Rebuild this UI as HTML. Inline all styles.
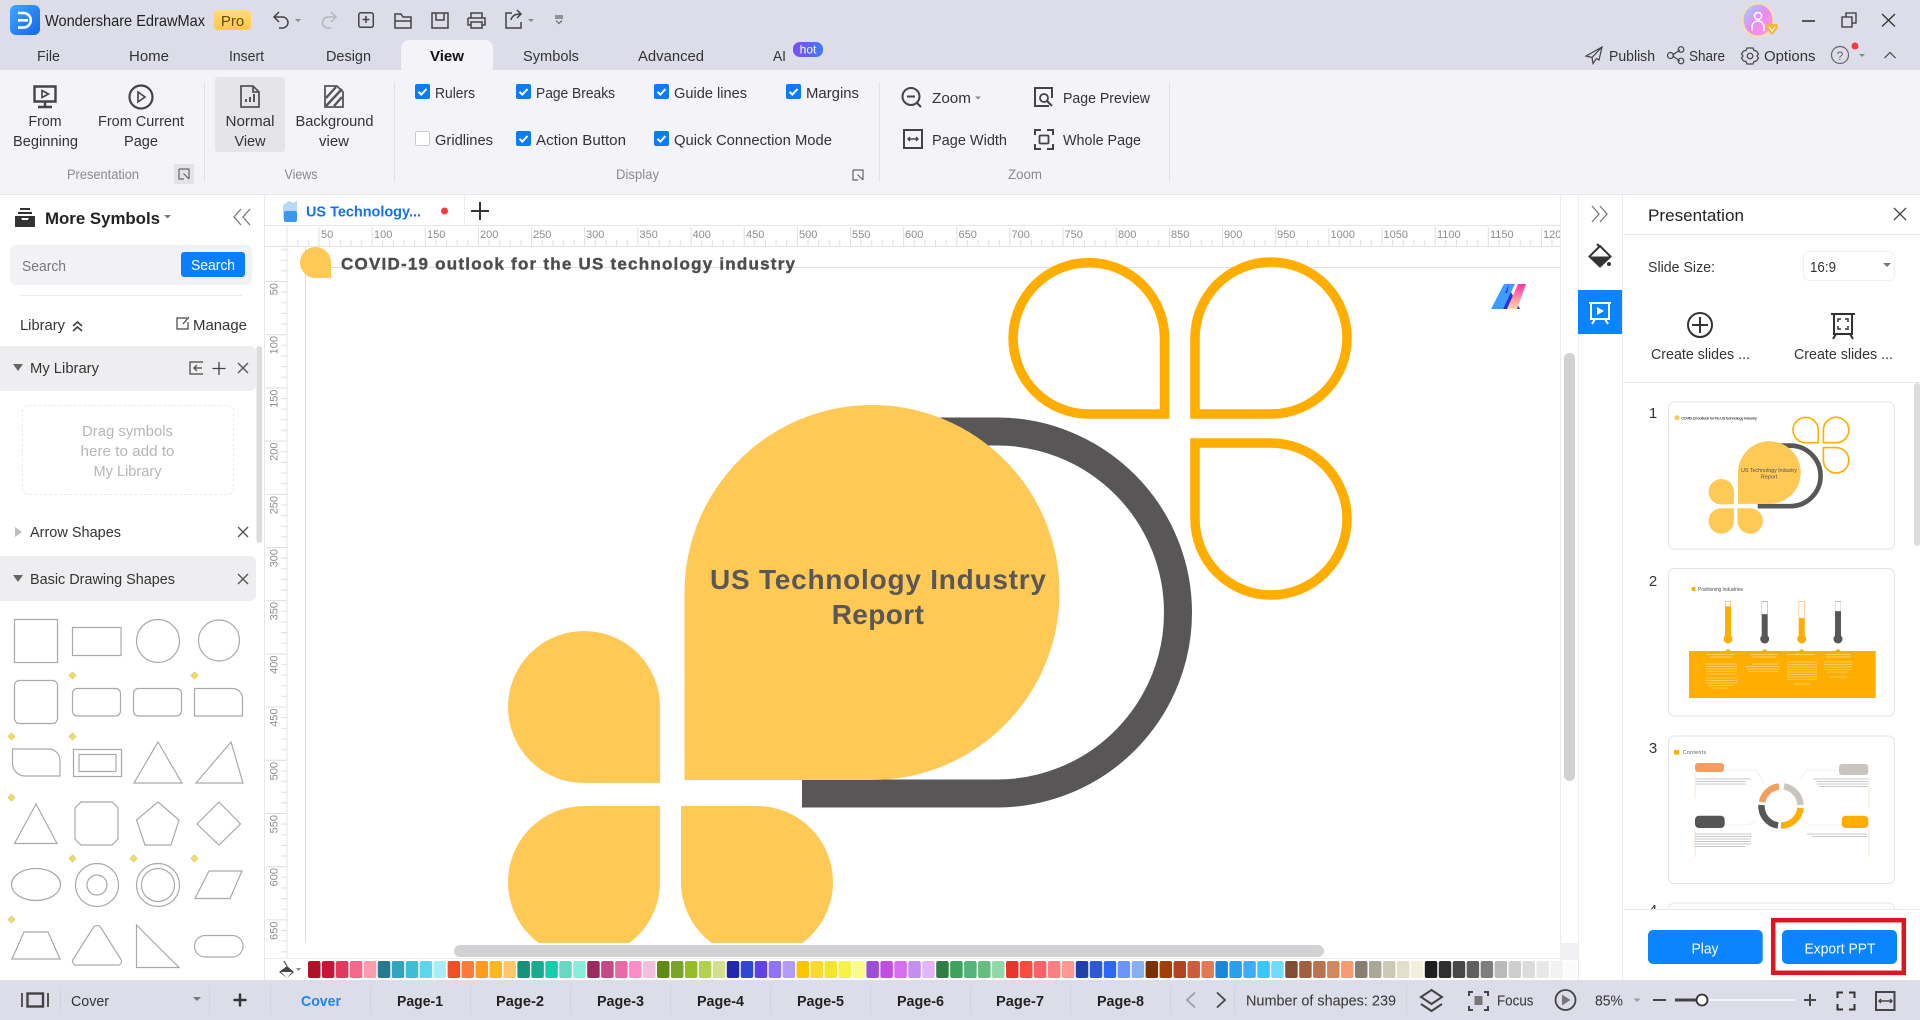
<!DOCTYPE html>
<html lang="en"><head><meta charset="utf-8"><title>Wondershare EdrawMax</title>
<style>
html,body{margin:0;padding:0;background:#fff;width:1920px;height:1020px;overflow:hidden}
svg{display:block}
text{font-family:"Liberation Sans",sans-serif;font-size:15px;fill:#333}
.l{fill:#8b8b8b;font-size:13px}
.m{text-anchor:middle}
.r{font-size:11px;fill:#8c8c8c}
.b{font-weight:700;fill:#222}
.i{fill:none;stroke:#444;stroke-width:1.5}
.s{fill:none;stroke:#a9a9a9;stroke-width:1.2}
.d{fill:#efdc70;stroke:#d8c95a;stroke-width:.7}
.y{fill:#fec955}
.o{fill:none;stroke:#ffae00}
</style></head><body>
<svg width="1920" height="1020" viewBox="0 0 1920 1020" xmlns="http://www.w3.org/2000/svg">
<defs>
<linearGradient id="g1" x1="0" y1="0" x2="1" y2="1"><stop offset="0" stop-color="#41a5ff"/><stop offset="1" stop-color="#1468e6"/></linearGradient>
<linearGradient id="g2" x1="0" y1="0" x2="0" y2="1"><stop offset="0" stop-color="#ffdc7c"/><stop offset="1" stop-color="#ffc64a"/></linearGradient>
<linearGradient id="g3" x1="0" y1="0" x2="1" y2="0"><stop offset="0" stop-color="#7b4df0"/><stop offset="1" stop-color="#3f7cf5"/></linearGradient>
<linearGradient id="g4" x1="0" y1="0" x2="1" y2="1"><stop offset="0" stop-color="#8fd8ff"/><stop offset=".5" stop-color="#e88cf5"/><stop offset="1" stop-color="#ff9ad0"/></linearGradient>
<linearGradient id="g5" x1="0" y1="0" x2="0" y2="1"><stop offset="0" stop-color="#ff2fa8"/><stop offset="1" stop-color="#ffd9a0"/></linearGradient>
<pattern id="hr" x="318.5" y="225" width="53.15" height="21" patternUnits="userSpaceOnUse">
<path d="M.5 2V21M11.1 15V21M21.8 15V21M32.4 15V21M43 15V21" stroke="#dedede" fill="none"/></pattern>
<pattern id="vr" x="264" y="281" width="23" height="53.2" patternUnits="userSpaceOnUse">
<path d="M2 .5H23M17 11.1H23M17 21.8H23M17 32.4H23M17 43H23" stroke="#dedede" fill="none"/></pattern>
<clipPath id="cv"><rect x="287" y="246" width="1273" height="697"/></clipPath>
<clipPath id="hc"><rect x="287" y="225" width="1273" height="21"/></clipPath>
<clipPath id="pc"><rect x="1622" y="383" width="298" height="526"/></clipPath>
<g id="cb"><rect width="15" height="15" rx="2" fill="#0b7cf5"/><path d="M3.5 7.8l2.8 2.8 5.2-5.6" fill="none" stroke="#fff" stroke-width="2"/></g>
<path id="tx" d="M0 0l10 10M10 0l-10 10" fill="none" stroke="#555" stroke-width="1.4"/>
<path id="cn" d="M0 0h10v10M10 10l-5.5-5.5M0 0v10h5" fill="none" stroke="#666" stroke-width="1.2"/>
</defs>

<rect width="1920" height="1020" fill="#fff"/>
<!-- title bar -->
<rect width="1920" height="70" fill="#dcdde8"/>
<rect y="70" width="1920" height="124" fill="#f3f3f8"/>
<rect y="194" width="1920" height="1" fill="#e7e7ec"/>
<rect x="10" y="5" width="30" height="30" rx="6" fill="url(#g1)"/>
<path d="M18 13h5.5a7.3 7.3 0 0 1 0 14.6H18M18 20.3h10" fill="none" stroke="#fff" stroke-width="2.6"/>
<text x="45" y="26" textLength="160" lengthAdjust="spacingAndGlyphs" style="font-size:16px;fill:#222">Wondershare EdrawMax</text>
<rect x="214" y="10" width="37" height="20" rx="4" fill="url(#g2)"/>
<text x="232.500" y="26" class="m" style="font-size:15px;fill:#6b4a00">Pro</text>
<!-- quick access -->
<path class="i" d="M279 14l-5 5 5 5M274 19h8.500a5.500 5.500 0 0 1 0 11h-3.500" transform="translate(0 -2)"/>
<path d="M295 19h6l-3 3z" fill="#888"/>
<path d="M331 12l5 5-5 5M336 17h-8a5.500 5.500 0 0 0 0 11h3" fill="none" stroke="#b5b5bd" stroke-width="1.500"/>
<rect class="i" x="358.800" y="12.800" width="14.500" height="14.500" rx="2"/><path class="i" d="M366 16v7M362.500 19.500h7"/>
<path class="i" d="M395 28V14h6l2 3h8v11zM395 21h16"/>
<path class="i" d="M432 13h16v15h-16zM436 13v7h8v-7"/>
<path class="i" d="M471 18v-5h11v5M468 18h17v7h-3M471 25h-3v-7M471 22h11v6h-11z"/>
<path class="i" d="M512 13h-6v15h15v-6M511 20c1-4 4-6 9-6M517 10l4 4-4 4"/>
<path d="M528 19h6l-3 3z" fill="#888"/>
<path d="M555 18h8M556 20.500l3 3 3-3M555 16h8" fill="none" stroke="#666" stroke-width="1.200"/>
<!-- tabs -->
<rect x="401" y="40" width="92" height="34" rx="8" fill="#f3f3f8"/>
<text x="37" y="61" textLength="23" lengthAdjust="spacingAndGlyphs">File</text>
<text x="129" y="61" textLength="40" lengthAdjust="spacingAndGlyphs">Home</text>
<text x="229" y="61" textLength="35" lengthAdjust="spacingAndGlyphs">Insert</text>
<text x="326" y="61" textLength="45" lengthAdjust="spacingAndGlyphs">Design</text>
<text x="430" y="61" textLength="34" lengthAdjust="spacingAndGlyphs" style="font-weight:700;fill:#111">View</text>
<text x="523" y="61" textLength="56" lengthAdjust="spacingAndGlyphs">Symbols</text>
<text x="638" y="61" textLength="66" lengthAdjust="spacingAndGlyphs">Advanced</text>
<text x="773" y="61" textLength="13" lengthAdjust="spacingAndGlyphs">AI</text>
<rect x="793" y="42" width="30" height="15" rx="7" fill="url(#g3)"/>
<text x="808" y="53.500" class="m" style="font-size:12px;fill:#fff">hot</text>
<!-- window buttons -->
<rect x="1742" y="3" width="32" height="34" rx="16" fill="#ffe0a0"/>
<ellipse cx="1758" cy="20" rx="14.500" ry="15.500" fill="url(#g4)"/>
<circle cx="1758" cy="16" r="3.500" fill="none" stroke="#fff" stroke-width="1.500"/>
<path d="M1752 31v-4a6 6 0 0 1 12 0v4" fill="none" stroke="#fff" stroke-width="1.500"/>
<path d="M1767 24h10l1 4-6 7-6-7z" fill="#fbb62e"/><path d="M1769 27l3 4 3-4" fill="none" stroke="#fff" stroke-width="1.200"/>
<path d="M1802 21h13" stroke="#333" stroke-width="1.600"/>
<path d="M1846 17v-4h10v10h-4M1842 17h10v10h-10z" fill="none" stroke="#333" stroke-width="1.300"/>
<path d="M1882 14l13 12.500M1895 14l-13 12.500" stroke="#333" stroke-width="1.300"/>
<path d="M1602 47l-16 9 6 1.500 1 6 3.500-5 2.500 1.500zM1592 57.500l10-10.500" fill="none" stroke="#444" stroke-width="1.200"/>
<text x="1609" y="61" textLength="46" lengthAdjust="spacingAndGlyphs">Publish</text>
<path d="M1672.500 55l7.500-5M1672.500 56l7.500 5" stroke="#444" stroke-width="1.200"/><circle fill="none" stroke="#444" stroke-width="1.200" cx="1670.500" cy="55.500" r="3"/><circle cx="1681" cy="49.500" r="2.800" fill="none" stroke="#444" stroke-width="1.200"/><circle cx="1681" cy="61" r="2.800" fill="none" stroke="#444" stroke-width="1.200"/>
<text x="1689" y="61" textLength="36" lengthAdjust="spacingAndGlyphs">Share</text>
<path d="M1747 48h6l1 2.500 2.500 .5 2 3-1.500 2 1.500 2-2 3-2.500 .5-1 2.500h-6l-1-2.500-2.500-.5-2-3 1.500-2-1.500-2 2-3 2.500-.5z" fill="none" stroke="#444" stroke-width="1.200"/><circle cx="1750" cy="56" r="2.800" fill="none" stroke="#444" stroke-width="1.200"/>
<text x="1764" y="61" textLength="51.500" lengthAdjust="spacingAndGlyphs">Options</text>
<circle cx="1840" cy="55" r="8.500" fill="none" stroke="#666" stroke-width="1.200"/>
<text x="1840" y="60" class="m" style="font-size:12px;fill:#666">?</text>
<circle cx="1855" cy="46" r="3.500" fill="#f53a3f"/>
<path d="M1859 54h6l-3 3z" fill="#888"/>
<path d="M1884.500 58l5.500-5.500 5.500 5.500" fill="none" stroke="#444" stroke-width="1.200"/>

<!-- ribbon: presentation -->
<path d="M34.500 86.500h21v15h-21zM45 102v4M38 107h14" fill="none" stroke="#444" stroke-width="2.400"/>
<path d="M42 90.500l6.500 3.500-6.500 3.500z" fill="none" stroke="#444" stroke-width="1.600"/>
<text x="45" y="126" class="m" textLength="33" lengthAdjust="spacingAndGlyphs">From</text><text x="45.500" y="146" class="m" textLength="65" lengthAdjust="spacingAndGlyphs">Beginning</text>
<circle cx="141" cy="97" r="11.500" fill="none" stroke="#444" stroke-width="2.200"/><path d="M138 92l7 5-7 5z" fill="none" stroke="#444" stroke-width="1.600"/>
<text x="141" y="126" class="m" textLength="86" lengthAdjust="spacingAndGlyphs">From Current</text><text x="141" y="146" class="m" textLength="34" lengthAdjust="spacingAndGlyphs">Page</text>
<text x="103" y="179" class="l m" textLength="72" lengthAdjust="spacingAndGlyphs" style="font-size:14px">Presentation</text>
<rect x="174" y="164" width="20" height="20" fill="#e3e3e7"/><use href="#cn" x="179" y="169"/>
<path d="M204.500 82v100M394.500 82v100M879.500 82v100M1169.500 82v100" stroke="#e2e2e6"/>
<rect x="215" y="77" width="70" height="75" rx="3" fill="#e5e5e9"/>
<path d="M241 86h12l6 6v15h-18zM253 86v6h6" fill="none" stroke="#555" stroke-width="1.800"/><path d="M246 102v-3M250 102v-5M254 102v-8" stroke="#555" stroke-width="2"/>
<text x="250" y="126" class="m" textLength="49" lengthAdjust="spacingAndGlyphs">Normal</text><text x="250" y="146" class="m" textLength="31" lengthAdjust="spacingAndGlyphs">View</text>
<path d="M325 86h12l6 6v15h-18z" fill="none" stroke="#555" stroke-width="1.800"/><path d="M326 98l10-11M326 106l16-17M334 106l8-9" stroke="#555" stroke-width="2.400"/>
<text x="334.500" y="126" class="m" textLength="78" lengthAdjust="spacingAndGlyphs">Background</text><text x="334" y="146" class="m" textLength="30" lengthAdjust="spacingAndGlyphs">view</text>
<text x="301" y="179" class="l m" style="font-size:14px" textLength="33" lengthAdjust="spacingAndGlyphs">Views</text>
<!-- display -->
<use href="#cb" x="415" y="84"/><text x="435" y="98" textLength="40" lengthAdjust="spacingAndGlyphs">Rulers</text>
<use href="#cb" x="516" y="84"/><text x="536" y="98" textLength="79" lengthAdjust="spacingAndGlyphs">Page Breaks</text>
<use href="#cb" x="654" y="84"/><text x="674" y="98" textLength="73" lengthAdjust="spacingAndGlyphs">Guide lines</text>
<use href="#cb" x="786" y="84"/><text x="806" y="98" textLength="53" lengthAdjust="spacingAndGlyphs">Margins</text>
<rect x="415.500" y="131.500" width="14" height="14" rx="2" fill="#fff" stroke="#c9c9cf"/><text x="435" y="145" textLength="58" lengthAdjust="spacingAndGlyphs">Gridlines</text>
<use href="#cb" x="516" y="131"/><text x="536" y="145" textLength="90" lengthAdjust="spacingAndGlyphs">Action Button</text>
<use href="#cb" x="654" y="131"/><text x="674" y="145" textLength="158" lengthAdjust="spacingAndGlyphs">Quick Connection Mode</text>
<text x="616" y="179" class="l" textLength="43" lengthAdjust="spacingAndGlyphs" style="font-size:14px">Display</text>
<use href="#cn" x="853" y="170"/>
<!-- zoom -->
<circle cx="911" cy="96.500" r="8.500" fill="none" stroke="#444" stroke-width="2"/><path d="M907 96.500h8M917 103l4 4" stroke="#444" stroke-width="2"/>
<text x="932" y="103" textLength="39" lengthAdjust="spacingAndGlyphs">Zoom</text><path d="M975 96.500h6l-3 3z" fill="#888"/>
<path d="M1049 106h-14V88h17v10" fill="none" stroke="#444" stroke-width="2"/><circle cx="1044" cy="98" r="4" fill="none" stroke="#444" stroke-width="1.800"/><path d="M1047 101l5 5" stroke="#444" stroke-width="2"/>
<text x="1063" y="103" textLength="87" lengthAdjust="spacingAndGlyphs">Page Preview</text>
<rect x="904" y="130" width="18" height="18" fill="none" stroke="#444" stroke-width="2"/><path d="M908 139h10M910 137l-2 2 2 2M916 137l2 2-2 2" fill="none" stroke="#444" stroke-width="1.400"/>
<text x="932" y="145" textLength="75" lengthAdjust="spacingAndGlyphs">Page Width</text>
<path d="M1041 130h-6v5M1047 130h6v5M1041 149h-6v-5M1047 149h6v-5" fill="none" stroke="#444" stroke-width="2"/><rect x="1039.500" y="135.500" width="9" height="8" rx="1" fill="none" stroke="#444" stroke-width="1.800"/>
<text x="1063" y="145" textLength="78" lengthAdjust="spacingAndGlyphs">Whole Page</text>
<text x="1025" y="179" class="l m" style="font-size:14px" textLength="34" lengthAdjust="spacingAndGlyphs">Zoom</text>

<!-- left panel -->
<path d="M264.500 195V980" stroke="#e8e8ec"/>
<path d="M20 209h10M18 213h14M16 217h18v9H16z" fill="none" stroke="#333" stroke-width="2"/><path d="M16 217h5l1 3h6l1-3h5v9H16z" fill="#333"/>
<text x="45" y="224" textLength="115" lengthAdjust="spacingAndGlyphs" style="font-size:17px;fill:#222;font-weight:700">More Symbols</text>
<path d="M164 215h7l-3.500 3.500z" fill="#777"/>
<path d="M241 209l-7 8 7 8M250 209l-7 8 7 8" fill="none" stroke="#777" stroke-width="1.300"/>
<rect x="10" y="245" width="242" height="40" rx="6" fill="#f2f2f6"/>
<text x="22" y="271" textLength="44" lengthAdjust="spacingAndGlyphs" style="fill:#777">Search</text>
<rect x="181" y="252" width="64" height="25" rx="3" fill="#0b7ffb"/>
<text x="213" y="270" class="m" textLength="44" lengthAdjust="spacingAndGlyphs" style="fill:#fff">Search</text>
<rect x="20" y="295" width="222" height="1" fill="#ececf0"/>
<text x="20" y="330" textLength="45" lengthAdjust="spacingAndGlyphs">Library</text>
<path d="M73 326l4.500-4 4.500 4M73 331l4.500-4 4.500 4" fill="none" stroke="#444" stroke-width="1.700"/>
<path d="M187 318h-10v11h11v-7M183 324l6-7" fill="none" stroke="#444" stroke-width="1.200"/>
<text x="193" y="330" textLength="54" lengthAdjust="spacingAndGlyphs">Manage</text>
<path d="M0 346h250a6 6 0 0 1 6 6v33a6 6 0 0 1-6 6H0z" fill="#eeeef0"/>
<path d="M13 364h10l-5 7z" fill="#666"/>
<text x="30" y="373" textLength="69" lengthAdjust="spacingAndGlyphs">My Library</text>
<path d="M203 362h-13v12h13M202 368h-8M197 365l-3 3 3 3" fill="none" stroke="#444" stroke-width="1.200"/>
<path d="M219 362v13M212.500 368.500h13" stroke="#444" stroke-width="1.300"/><use href="#tx" x="238" y="363"/>
<rect x="22.500" y="405.500" width="211" height="89" rx="6" fill="#fff" stroke="#ebebeb" stroke-dasharray="3 2"/>
<text x="127.500" y="436" class="m" textLength="91" lengthAdjust="spacingAndGlyphs" style="fill:#b6b6b6">Drag symbols</text>
<text x="127.500" y="456" class="m" textLength="94" lengthAdjust="spacingAndGlyphs" style="fill:#b6b6b6">here to add to</text>
<text x="127.500" y="476" class="m" textLength="68" lengthAdjust="spacingAndGlyphs" style="fill:#b6b6b6">My Library</text>
<path d="M15 527l7 5-7 5z" fill="#bdbdbd"/>
<text x="30" y="537" textLength="91" lengthAdjust="spacingAndGlyphs">Arrow Shapes</text><use href="#tx" x="238" y="527"/>
<path d="M0 556h250a6 6 0 0 1 6 6v33a6 6 0 0 1-6 6H0z" fill="#eeeef0"/>
<path d="M13 575h10l-5 7z" fill="#666"/>
<text x="30" y="584" textLength="145" lengthAdjust="spacingAndGlyphs">Basic Drawing Shapes</text><use href="#tx" x="238" y="574"/>
<rect x="256.500" y="346" width="5.500" height="197" rx="2.700" fill="#dcdcdf"/>
<!-- shape palette -->
<rect class="s" x="14.500" y="619.500" width="43" height="43"/>
<rect class="s" x="72.500" y="627.500" width="48.500" height="28"/>
<circle class="s" cx="158" cy="641" r="21.500"/><circle class="s" cx="219" cy="640.500" r="20.500"/>
<rect class="s" x="14.500" y="680.500" width="43" height="43" rx="5"/>
<rect class="s" x="72.500" y="688.500" width="48" height="27.500" rx="5"/>
<rect class="s" x="133.500" y="688.500" width="48" height="27.500" rx="5"/>
<path class="s" d="M194.500 688.500h38a10 10 0 0 1 10 10v17.500h-48z"/>
<path class="s" d="M12.500 749h36a11.500 11.500 0 0 1 11.500 11.500V776H25a12.500 12.500 0 0 1-12.500-12.500z"/>
<rect class="s" x="73.500" y="749.500" width="48" height="27"/><rect class="s" x="79" y="754.500" width="37" height="17"/>
<path class="s" d="M158 742l24 41h-48zM231 742l12 41h-47zM36 804l21 39.500H14.500z"/>
<path class="s" d="M81 802h31l6 6v31l-6 6H81l-6-6v-31zM158 802l21 18-8 25h-26l-8.500-25zM219 802l21.500 22-21.500 21-22-21z"/>
<ellipse class="s" cx="36" cy="884.500" rx="24.500" ry="16"/>
<circle class="s" cx="97" cy="885" r="21.500"/><circle class="s" cx="97" cy="885" r="10"/>
<circle class="s" cx="158" cy="885" r="21.500"/><circle class="s" cx="158" cy="885" r="16.500"/>
<path class="s" d="M209 871h33l-12 27.500h-35zM24 932h24l12 27H12z"/>
<path class="s" d="M93 928a4.500 4.500 0 0 1 8 0l19 30a4 4 0 0 1-3.500 7h-39a4 4 0 0 1-3.500-7zM136.500 925l42.500 42.500h-42.500z"/>
<rect class="s" x="194.500" y="935.500" width="48.500" height="21.500" rx="10.700"/>
<path class="d" d="M72.500 672l3.500 3.500-3.500 3.500-3.500-3.500zM194.500 672l3.500 3.500-3.500 3.500-3.500-3.500zM11.500 733l3.500 3.500-3.500 3.500-3.500-3.500zM72.500 733l3.500 3.500-3.500 3.500-3.500-3.500zM11.500 794l3.500 3.500-3.500 3.500-3.500-3.500zM72.500 855l3.500 3.500-3.500 3.500-3.500-3.500zM133.500 855l3.500 3.500-3.500 3.500-3.500-3.500zM194.500 855l3.500 3.500-3.500 3.500-3.500-3.500zM11.500 916l3.500 3.500-3.500 3.500-3.500-3.500z"/>

<!-- document tab bar -->
<path d="M283 205l6-4 4 2 4-2v18h-14z" fill="#b6d8fb"/><rect x="284" y="211" width="13" height="11" rx="2" fill="#3d95f2"/>
<text x="306" y="216.500" textLength="115" lengthAdjust="spacingAndGlyphs" style="font-weight:700;fill:#1273e6">US Technology...</text>
<circle cx="444.500" cy="211" r="3.500" fill="#f53a3f"/>
<path d="M464.500 195v30" stroke="#ececf0"/>
<path d="M480 202v18M471 211h18" stroke="#333" stroke-width="2"/>
<rect x="265" y="225" width="1295" height="1" fill="#e6e6e9"/>
<!-- rulers -->
<rect x="287" y="225" width="1273" height="21" fill="url(#hr)"/>
<rect x="265" y="246" width="1295" height="1" fill="#e4e4e6"/>
<rect x="264" y="246" width="23" height="712" fill="url(#vr)"/>
<rect x="286.500" y="226" width="1" height="732" fill="#e4e4e6"/>
<g clip-path="url(#hc)">
<text class="r" x="321" y="238">50</text><text class="r" x="374" y="238">100</text><text class="r" x="427" y="238">150</text><text class="r" x="480" y="238">200</text><text class="r" x="533" y="238">250</text><text class="r" x="586" y="238">300</text><text class="r" x="639.500" y="238">350</text><text class="r" x="692.500" y="238">400</text><text class="r" x="746" y="238">450</text><text class="r" x="799" y="238">500</text><text class="r" x="852" y="238">550</text><text class="r" x="905" y="238">600</text><text class="r" x="958.500" y="238">650</text><text class="r" x="1011.500" y="238">700</text><text class="r" x="1064.500" y="238">750</text><text class="r" x="1118" y="238">800</text><text class="r" x="1171" y="238">850</text><text class="r" x="1224" y="238">900</text><text class="r" x="1277" y="238">950</text><text class="r" x="1330.500" y="238">1000</text><text class="r" x="1383.500" y="238">1050</text><text class="r" x="1437" y="238">1100</text><text class="r" x="1490" y="238">1150</text><text class="r" x="1543" y="238">1200</text>
</g>
<g text-anchor="end">
<text class="r" transform="translate(277.500 283) rotate(-90)">50</text>
<text class="r" transform="translate(277.500 336) rotate(-90)">100</text>
<text class="r" transform="translate(277.500 389.500) rotate(-90)">150</text>
<text class="r" transform="translate(277.500 442.500) rotate(-90)">200</text>
<text class="r" transform="translate(277.500 496) rotate(-90)">250</text>
<text class="r" transform="translate(277.500 549) rotate(-90)">300</text>
<text class="r" transform="translate(277.500 602) rotate(-90)">350</text>
<text class="r" transform="translate(277.500 655.500) rotate(-90)">400</text>
<text class="r" transform="translate(277.500 708.500) rotate(-90)">450</text>
<text class="r" transform="translate(277.500 762) rotate(-90)">500</text>
<text class="r" transform="translate(277.500 815) rotate(-90)">550</text>
<text class="r" transform="translate(277.500 868) rotate(-90)">600</text>
<text class="r" transform="translate(277.500 921.500) rotate(-90)">650</text>
</g>
<!-- slide -->
<g clip-path="url(#cv)">
<rect x="305" y="247" width="1" height="700" fill="#dedee0"/>
<rect x="331" y="267" width="1229" height="1" fill="#dedee0"/>
<path class="y" d="M331 278h-15.500a15.500 15.500 0 1 1 15.500-15.500z"/>
<text x="341" y="269.500" textLength="454" style="font-weight:700;font-size:17px;fill:#4f4c4d;stroke:#4f4c4d;stroke-width:.4">COVID-19 outlook for the US technology industry</text>
<path d="M802 793.500H997A181 181 0 0 0 997 431.500H940" fill="none" stroke="#585657" stroke-width="28"/>
<path class="y" d="M684.500 780V592A187.500 187.500 0 1 1 872 780z"/>
<text x="878" y="589" class="m" textLength="336" style="font-weight:700;font-size:28px;fill:#5a5758">US Technology Industry</text>
<text x="878" y="624" class="m" style="font-weight:700;font-size:28px;fill:#5a5758;letter-spacing:.4px">Report</text>
<path class="y" d="M660 783H584A76 76 0 1 1 660 707z"/>
<path class="y" d="M660 806V882A76 76 0 1 1 584 806z"/>
<path class="y" d="M681 806H757A76 76 0 1 1 681 882z"/>
<path class="o" stroke-width="9.500" d="M1164.500 414H1089A75.700 75.700 0 1 1 1164.500 339z"/>
<path class="o" stroke-width="9.500" d="M1195 414V339A76 76 0 1 1 1271 414z"/>
<path class="o" stroke-width="9.500" d="M1195 443H1271A76 76 0 1 1 1195 519z"/>
<path d="M1491 309l13-25h11l-12 25z" fill="#3e9bff"/>
<path d="M1503 309l8-17 9 17z" fill="#2a35d6"/>
<path d="M1509 284l-4 9 2 0z" fill="#2a35d6"/>
<path d="M1507 309l11-25h8l-9 25z" fill="url(#g5)"/>
</g>
<!-- canvas scrollbars -->
<rect x="1564" y="353" width="11" height="428" rx="5" fill="#d2d2d4"/>
<path d="M1560.500 195v785M1578.500 195v785" stroke="#ececf0"/>
<rect x="454" y="945" width="870" height="12" rx="6" fill="#d2d2d4"/>
<rect x="1560" y="943" width="18" height="17" fill="#f0f0f3"/>
<rect x="265" y="958" width="1295" height="1" fill="#ececee"/>
<!-- colour strip -->
<path d="M287 966l-8 6 8 6 7-6zM281 972h11l-5 6z" fill="#444"/><path d="M284 961l3 5" stroke="#444" stroke-width="1.200"/><path d="M296 968h5l-2.500 3z" fill="#888"/>
<g transform="translate(308 961)"><rect x="0" width="12.500" height="17" rx="2" fill="#b01228"/><rect x="13.960" width="12.500" height="17" rx="2" fill="#c9143a"/><rect x="27.920" width="12.500" height="17" rx="2" fill="#e23a5e"/><rect x="41.880" width="12.500" height="17" rx="2" fill="#f5688a"/><rect x="55.840" width="12.500" height="17" rx="2" fill="#fa9bb0"/></g>
<g transform="translate(377.800 961)"><rect x="0" width="12.500" height="17" rx="2" fill="#27798f"/><rect x="13.960" width="12.500" height="17" rx="2" fill="#34a3bd"/><rect x="27.920" width="12.500" height="17" rx="2" fill="#3dbdd8"/><rect x="41.880" width="12.500" height="17" rx="2" fill="#5cd6ec"/><rect x="55.840" width="12.500" height="17" rx="2" fill="#a8ecfa"/></g>
<g transform="translate(447.600 961)"><rect x="0" width="12.500" height="17" rx="2" fill="#f54e24"/><rect x="13.960" width="12.500" height="17" rx="2" fill="#ff7a3a"/><rect x="27.920" width="12.500" height="17" rx="2" fill="#ff9a1f"/><rect x="41.880" width="12.500" height="17" rx="2" fill="#ffb71f"/><rect x="55.840" width="12.500" height="17" rx="2" fill="#ffc866"/></g>
<g transform="translate(517.400 961)"><rect x="0" width="12.500" height="17" rx="2" fill="#149179"/><rect x="13.960" width="12.500" height="17" rx="2" fill="#17ab90"/><rect x="27.920" width="12.500" height="17" rx="2" fill="#16ccaf"/><rect x="41.880" width="12.500" height="17" rx="2" fill="#66d8c4"/><rect x="55.840" width="12.500" height="17" rx="2" fill="#88ecdc"/></g>
<g transform="translate(587.200 961)"><rect x="0" width="12.500" height="17" rx="2" fill="#9b2a5f"/><rect x="13.960" width="12.500" height="17" rx="2" fill="#c24a86"/><rect x="27.920" width="12.500" height="17" rx="2" fill="#e66aa6"/><rect x="41.880" width="12.500" height="17" rx="2" fill="#f98ccb"/><rect x="55.840" width="12.500" height="17" rx="2" fill="#f0c0dd"/></g>
<g transform="translate(657 961)"><rect x="0" width="12.500" height="17" rx="2" fill="#5f8a14"/><rect x="13.960" width="12.500" height="17" rx="2" fill="#7aa32a"/><rect x="27.920" width="12.500" height="17" rx="2" fill="#98bc28"/><rect x="41.880" width="12.500" height="17" rx="2" fill="#b3d04e"/><rect x="55.840" width="12.500" height="17" rx="2" fill="#d4e08f"/></g>
<g transform="translate(726.800 961)"><rect x="0" width="12.500" height="17" rx="2" fill="#2028ad"/><rect x="13.960" width="12.500" height="17" rx="2" fill="#2f48d4"/><rect x="27.920" width="12.500" height="17" rx="2" fill="#6340e8"/><rect x="41.880" width="12.500" height="17" rx="2" fill="#9272f5"/><rect x="55.840" width="12.500" height="17" rx="2" fill="#b29cf5"/></g>
<g transform="translate(796.600 961)"><rect x="0" width="12.500" height="17" rx="2" fill="#fbc600"/><rect x="13.960" width="12.500" height="17" rx="2" fill="#fdd92e"/><rect x="27.920" width="12.500" height="17" rx="2" fill="#f2e52e"/><rect x="41.880" width="12.500" height="17" rx="2" fill="#f7f14a"/><rect x="55.840" width="12.500" height="17" rx="2" fill="#fbfb8a"/></g>
<g transform="translate(866.400 961)"><rect x="0" width="12.500" height="17" rx="2" fill="#9a4fd6"/><rect x="13.960" width="12.500" height="17" rx="2" fill="#c04fe0"/><rect x="27.920" width="12.500" height="17" rx="2" fill="#d56ef0"/><rect x="41.880" width="12.500" height="17" rx="2" fill="#c48df0"/><rect x="55.840" width="12.500" height="17" rx="2" fill="#e4b4f8"/></g>
<g transform="translate(936.200 961)"><rect x="0" width="12.500" height="17" rx="2" fill="#2e7d46"/><rect x="13.960" width="12.500" height="17" rx="2" fill="#3ba35a"/><rect x="27.920" width="12.500" height="17" rx="2" fill="#54b37a"/><rect x="41.880" width="12.500" height="17" rx="2" fill="#66bd80"/><rect x="55.840" width="12.500" height="17" rx="2" fill="#90d8aa"/></g>
<g transform="translate(1006 961)"><rect x="0" width="12.500" height="17" rx="2" fill="#e8352c"/><rect x="13.960" width="12.500" height="17" rx="2" fill="#fb4a3e"/><rect x="27.920" width="12.500" height="17" rx="2" fill="#f9626a"/><rect x="41.880" width="12.500" height="17" rx="2" fill="#fb7f80"/><rect x="55.840" width="12.500" height="17" rx="2" fill="#fd9a90"/></g>
<g transform="translate(1075.800 961)"><rect x="0" width="12.500" height="17" rx="2" fill="#2040a8"/><rect x="13.960" width="12.500" height="17" rx="2" fill="#3058d0"/><rect x="27.920" width="12.500" height="17" rx="2" fill="#2e68f0"/><rect x="41.880" width="12.500" height="17" rx="2" fill="#6c94f8"/><rect x="55.840" width="12.500" height="17" rx="2" fill="#86b0f0"/></g>
<g transform="translate(1145.600 961)"><rect x="0" width="12.500" height="17" rx="2" fill="#7a3000"/><rect x="13.960" width="12.500" height="17" rx="2" fill="#a04008"/><rect x="27.920" width="12.500" height="17" rx="2" fill="#ae4420"/><rect x="41.880" width="12.500" height="17" rx="2" fill="#cc5c3a"/><rect x="55.840" width="12.500" height="17" rx="2" fill="#e07a54"/></g>
<g transform="translate(1215.400 961)"><rect x="0" width="12.500" height="17" rx="2" fill="#1a88d8"/><rect x="13.960" width="12.500" height="17" rx="2" fill="#2aa0ec"/><rect x="27.920" width="12.500" height="17" rx="2" fill="#3caef8"/><rect x="41.880" width="12.500" height="17" rx="2" fill="#38c8fc"/><rect x="55.840" width="12.500" height="17" rx="2" fill="#70dcfc"/></g>
<g transform="translate(1285.200 961)"><rect x="0" width="12.500" height="17" rx="2" fill="#7f4e34"/><rect x="13.960" width="12.500" height="17" rx="2" fill="#a0603c"/><rect x="27.920" width="12.500" height="17" rx="2" fill="#b87450"/><rect x="41.880" width="12.500" height="17" rx="2" fill="#d08860"/><rect x="55.840" width="12.500" height="17" rx="2" fill="#f49c70"/></g>
<g transform="translate(1355 961)"><rect x="0" width="12.500" height="17" rx="2" fill="#8a7e72"/><rect x="13.960" width="12.500" height="17" rx="2" fill="#aba898"/><rect x="27.920" width="12.500" height="17" rx="2" fill="#ccc9b4"/><rect x="41.880" width="12.500" height="17" rx="2" fill="#e3dfcc"/><rect x="55.840" width="12.500" height="17" rx="2" fill="#f2efdc"/></g>
<g transform="translate(1424.800 961)"><rect x="0" width="12.500" height="17" rx="2" fill="#1e1e1e"/><rect x="13.960" width="12.500" height="17" rx="2" fill="#303030"/><rect x="27.920" width="12.500" height="17" rx="2" fill="#484848"/><rect x="41.880" width="12.500" height="17" rx="2" fill="#606060"/><rect x="55.840" width="12.500" height="17" rx="2" fill="#7e7e7e"/><rect x="69.800" width="12.500" height="17" rx="2" fill="#bababa"/><rect x="83.760" width="12.500" height="17" rx="2" fill="#cecece"/><rect x="97.720" width="12.500" height="17" rx="2" fill="#dcdcdc"/><rect x="111.680" width="12.500" height="17" rx="2" fill="#e8e8e8"/><rect x="125.640" width="12.500" height="17" rx="2" fill="#f2f2f2"/><rect x="139.600" width="12.500" height="17" rx="2" fill="#fbfbfb"/></g>

<!-- right toolbar -->
<path d="M1622.500 195V980" stroke="#ececf0"/>
<path d="M1592 206l7 8-7 8M1600 206l7 8-7 8" fill="none" stroke="#777" stroke-width="1.300"/>
<path d="M1600 246l-10.500 10.500 10.500 10 10.500-10z" fill="none" stroke="#333" stroke-width="2"/><path d="M1591 256.500h19l-9.500 10z" fill="#333"/><path d="M1600 247l-3-3" stroke="#333" stroke-width="2"/><circle cx="1609" cy="264" r="2" fill="#333"/>
<rect x="1578" y="290" width="44" height="44" fill="#0a84ff"/>
<path d="M1589 303h22M1591 303v16h18v-16M1595 319l-3 5M1605 319l3 5" fill="none" stroke="#fff" stroke-width="2"/><path d="M1597 307l7 4-7 4z" fill="#fff"/>

<!-- presentation panel -->
<text x="1648" y="221" textLength="96" lengthAdjust="spacingAndGlyphs" style="font-size:16.500px;fill:#222">Presentation</text>
<path d="M1894 208l12 12M1906 208l-12 12" stroke="#444" stroke-width="1.300"/>
<rect x="1622" y="234" width="298" height="1" fill="#e9e9ed"/>
<text x="1648" y="272" textLength="67" lengthAdjust="spacingAndGlyphs">Slide Size:</text>
<rect x="1803.500" y="251.500" width="91" height="29" rx="6" fill="#fff" stroke="#efeff2"/>
<text x="1810" y="272" textLength="26" lengthAdjust="spacingAndGlyphs">16:9</text>
<path d="M1883 263h8l-4 4z" fill="#777"/>
<circle cx="1700" cy="325" r="12" fill="none" stroke="#333" stroke-width="2"/><path d="M1700 317v16M1692 325h16" stroke="#333" stroke-width="2"/>
<path d="M1831 314h24M1834 314v20h18v-20M1836 334l-3 5M1850 334l3 5" fill="none" stroke="#333" stroke-width="2"/><path d="M1838 322v-3h3M1848 322v-3h-3M1838 326v3h3M1848 326v3h-3" fill="none" stroke="#333" stroke-width="1.500"/>
<text x="1651" y="359" textLength="99" lengthAdjust="spacingAndGlyphs">Create slides ...</text>
<text x="1794" y="359" textLength="99" lengthAdjust="spacingAndGlyphs">Create slides ...</text>
<rect x="1622" y="382" width="298" height="1" fill="#e9e9ed"/>
<g clip-path="url(#pc)">
<text x="1653" y="418" class="m">1</text>
<rect x="1668.500" y="402" width="226" height="147" rx="6" fill="#fff" stroke="#e3e3e7"/>
<circle cx="1677" cy="417.800" r="2.500" fill="#fec955"/>
<text x="1681" y="419.500" textLength="76" style="font-size:4px;fill:#555;font-weight:700">COVID-19 outlook for the US technology industry</text>
<g transform="translate(1623.600 373.500) scale(.1672)">
<path d="M802 793.500H997A181 181 0 0 0 997 431.500H940" fill="none" stroke="#585657" stroke-width="28"/>
<path class="y" d="M684.500 780V592A187.500 187.500 0 1 1 872 780z"/>
<path class="y" d="M660 783H584A76 76 0 1 1 660 707z"/>
<path class="y" d="M660 806V882A76 76 0 1 1 584 806z"/>
<path class="y" d="M681 806H757A76 76 0 1 1 681 882z"/>
<path class="o" stroke-width="10" d="M1164.500 414H1089A75.700 75.700 0 1 1 1164.500 339z"/>
<path class="o" stroke-width="10" d="M1195 414V339A76 76 0 1 1 1271 414z"/>
<path class="o" stroke-width="10" d="M1195 443H1271A76 76 0 1 1 1195 519z"/>
</g>
<text x="1769" y="472" class="m" textLength="56" style="font-size:5.500px;fill:#555">US Technology Industry</text>
<text x="1769" y="478.500" class="m" style="font-size:5.500px;fill:#555">Report</text>

<text x="1653" y="586" class="m">2</text>
<rect x="1668.500" y="568.500" width="226" height="147.500" rx="6" fill="#fff" stroke="#e3e3e7"/>
<rect x="1691.700" y="587" width="3.500" height="4" fill="#ffae00"/>
<text x="1698" y="591" textLength="45" style="font-size:5px;fill:#555">Positioning Industries</text>
<rect x="1725" y="601" width="6" height="37" fill="#ffae00"/><circle cx="1728" cy="639" r="4.500" fill="#ffae00"/><rect x="1725.500" y="601.500" width="5" height="5" fill="#fff" stroke="#f2c9a0" stroke-width=".6"/>
<rect x="1761.700" y="601" width="6" height="37" fill="#585657"/><circle cx="1764.700" cy="639" r="4.500" fill="#585657"/><rect x="1762" y="601.500" width="5.400" height="12.500" fill="#fff" stroke="#ddd" stroke-width=".4"/>
<rect x="1798.700" y="601" width="6" height="37" fill="#ffae00"/><circle cx="1801.700" cy="639" r="4.500" fill="#ffae00"/><rect x="1799" y="601.500" width="5.400" height="16.500" fill="#fff" stroke="#f2c9a0" stroke-width=".6"/>
<rect x="1835" y="601" width="6" height="37" fill="#585657"/><circle cx="1838" cy="639" r="4.500" fill="#585657"/><rect x="1835.300" y="601.500" width="5.400" height="9.500" fill="#fff" stroke="#ddd" stroke-width=".4"/>
<rect x="1689" y="651" width="186.700" height="47" fill="#ffae00"/>
<path d="M1725 651l3-2 3 2zM1761.700 651l3-2 3 2zM1798.700 651l3-2 3 2zM1835 651l3-2 3 2z" fill="#ffae00"/>
<path d="M1707 654.500h28M1710 657h22M1705 664h32M1705 666.500h32M1705 669h32M1706 671.500h30M1706 674h30M1705 678h32M1705 680.500h32M1705 683h32M1708 685.500h26M1713 688h15M1750 654.500h28M1752 657h24M1752 664h26M1746 666.500h33M1746 669h33M1748 671.500h30M1787 654.500h28M1787 662h30M1787 664.500h30M1787 667h30M1787 669.500h30M1787 672h30M1787 674.500h30M1787 677h30M1787 679.500h30M1793 684h18M1825 654.500h26M1825 657h26M1824 662h28M1824 664.500h28M1824 667h28M1824 669.500h28M1827 672h22M1829 677h18" stroke="#fff" stroke-width=".7" opacity=".5"/>

<text x="1653" y="753" class="m">3</text>
<rect x="1668.500" y="736" width="226" height="147.500" rx="6" fill="#fff" stroke="#e3e3e7"/>
<rect x="1674" y="750" width="5" height="4.500" fill="#ffae00"/>
<text x="1683" y="754" textLength="23" style="font-size:5px;fill:#555">Contents</text>
<path d="M1695 772v27M1869 777v31M1695 830v27M1869 830v27" stroke="#f3dcc5" stroke-width=".8"/>
<path d="M1724 770h32l7 10v5M1839 770h-32l-8 10M1724 825h25l7-5M1841 825h-32l-7-5" fill="none" stroke="#eee" stroke-width=".8"/>
<path d="M1696 779h55M1696 781.500h50M1696 784h50M1813 779h55M1816 781.500h52M1817 784h51M1819 786.500h49M1695 834h56M1695 836.500h56M1695 839h56M1695 841.500h56M1695 844h56M1695 846.500h50M1807 834h60M1812 836.500h55" stroke="#999" stroke-width=".8" opacity=".7"/>
<rect x="1695" y="763" width="29" height="9" rx="3" fill="#f59d5c"/>
<rect x="1839" y="764" width="29.300" height="11" rx="3" fill="#c9c5be"/>
<rect x="1695" y="815.700" width="29.700" height="12.300" rx="4" fill="#555"/>
<rect x="1841.700" y="815.700" width="26.600" height="12.300" rx="4" fill="#ffae00"/>
<path d="M1762 802A19.500 19.500 0 0 1 1779 786.500" fill="none" stroke="#f59d5c" stroke-width="6.500"/>
<path d="M1784 786.500A19.500 19.500 0 0 1 1800.500 805" fill="none" stroke="#c9c5be" stroke-width="6.500"/>
<path d="M1800.500 808A19.500 19.500 0 0 1 1781 825.500" fill="none" stroke="#ffae00" stroke-width="6.500"/>
<path d="M1778 825.500A19.500 19.500 0 0 1 1761.500 805" fill="none" stroke="#585657" stroke-width="6.500"/>

<text x="1653" y="915" class="m">4</text>
<rect x="1668.500" y="903" width="226" height="60" rx="6" fill="#fff" stroke="#e3e3e7"/>
</g>
<rect x="1914" y="383" width="6" height="163" rx="3" fill="#dcdcdf"/>
<rect x="1622" y="909" width="298" height="1" fill="#e9e9ed"/>
<rect x="1648" y="930" width="114.700" height="34" rx="5" fill="#0a84ff"/>
<text x="1705" y="953.500" class="m" textLength="27" lengthAdjust="spacingAndGlyphs" style="fill:#fff">Play</text>
<rect x="1773.200" y="920.200" width="130.600" height="52.600" fill="none" stroke="#e0141f" stroke-width="4.500"/>
<rect x="1782" y="930" width="115" height="34" rx="5" fill="#0a84ff"/>
<text x="1840" y="953.500" class="m" textLength="71" lengthAdjust="spacingAndGlyphs" style="fill:#fff">Export PPT</text>

<!-- bottom bar -->
<rect y="980" width="1920" height="40" fill="#dcdde8"/>
<path d="M22 993v14M48 993v14" stroke="#555" stroke-width="2"/><rect x="27.500" y="993.500" width="15.500" height="13" fill="none" stroke="#444" stroke-width="2.400"/>
<path d="M60.500 986v28M209.500 986v28M270.500 986v28" stroke="#d2d3de"/>
<text x="71" y="1006" textLength="38" lengthAdjust="spacingAndGlyphs">Cover</text>
<path d="M193 997h8l-4 4z" fill="#777"/>
<path d="M240 993.500v13M233.500 1000h13" stroke="#333" stroke-width="2.400"/>
<text x="301" y="1006" textLength="40" lengthAdjust="spacingAndGlyphs" style="font-weight:700;fill:#1e86ef">Cover</text>
<text x="397" y="1006" textLength="46" lengthAdjust="spacingAndGlyphs" class="b">Page-1</text>
<text x="496" y="1006" textLength="48" lengthAdjust="spacingAndGlyphs" class="b">Page-2</text>
<text x="597" y="1006" textLength="47" lengthAdjust="spacingAndGlyphs" class="b">Page-3</text>
<text x="697" y="1006" textLength="47" lengthAdjust="spacingAndGlyphs" class="b">Page-4</text>
<text x="797" y="1006" textLength="47" lengthAdjust="spacingAndGlyphs" class="b">Page-5</text>
<text x="897" y="1006" textLength="47" lengthAdjust="spacingAndGlyphs" class="b">Page-6</text>
<text x="996" y="1006" textLength="48" lengthAdjust="spacingAndGlyphs" class="b">Page-7</text>
<text x="1097" y="1006" textLength="47" lengthAdjust="spacingAndGlyphs" class="b">Page-8</text>
<path d="M370.500 986v28M470.500 986v28M570.500 986v28M670.500 986v28M770.500 986v28M870.500 986v28M970.500 986v28M1070.500 986v28M1170.500 986v28M1234.500 986v28M1406.500 986v28" stroke="#d2d3de"/>
<path d="M1195 992.500l-8 7.500 8 7.500" fill="none" stroke="#9b9ba5" stroke-width="1.700"/>
<path d="M1217 992.500l8 7.500-8 7.500" fill="none" stroke="#444" stroke-width="1.700"/>
<text x="1246" y="1005.500" textLength="150" lengthAdjust="spacingAndGlyphs">Number of shapes: 239</text>
<path d="M1431.500 990l10.500 7-10.500 7-10.500-7zM1421 1004l10.500 7 10.500-7" fill="none" stroke="#444" stroke-width="2"/>
<path d="M1473 992h-4v4M1484 992h4v4M1473 1010h-4v-4M1484 1010h4v-4" fill="none" stroke="#444" stroke-width="2"/><rect x="1474.500" y="996" width="8" height="9" fill="#777"/>
<text x="1497" y="1005.500" textLength="36.500" lengthAdjust="spacingAndGlyphs">Focus</text>
<circle cx="1565.500" cy="1000" r="10" fill="none" stroke="#444" stroke-width="1.800"/><path d="M1562 994.500l8.500 5.500-8.500 5.500z" fill="#777"/>
<text x="1595" y="1005.500" textLength="28" lengthAdjust="spacingAndGlyphs">85%</text>
<path d="M1633.500 998.500h7l-3.500 3.500z" fill="#999"/>
<path d="M1653 1000h13M1804 1000h12M1810 994v12" stroke="#444" stroke-width="2"/>
<rect x="1675" y="999" width="120" height="2" fill="#f4f4f8"/><rect x="1675" y="998.500" width="27" height="3" fill="#444"/>
<circle cx="1702" cy="1000" r="5.500" fill="#fff" stroke="#333" stroke-width="1.800"/>
<path d="M1843 992.500h-5.500v5.500M1849 992.500h5.500v5.500M1843 1009.500h-5.500v-5.500M1849 1009.500h5.500v-5.500" fill="none" stroke="#333" stroke-width="2"/>
<rect x="1876" y="992" width="18.500" height="18" fill="none" stroke="#444" stroke-width="2"/><path d="M1879 1001h13M1881 999l-2 2 2 2M1890 999l2 2-2 2" fill="none" stroke="#444" stroke-width="1.400"/>
</svg>
</body></html>
